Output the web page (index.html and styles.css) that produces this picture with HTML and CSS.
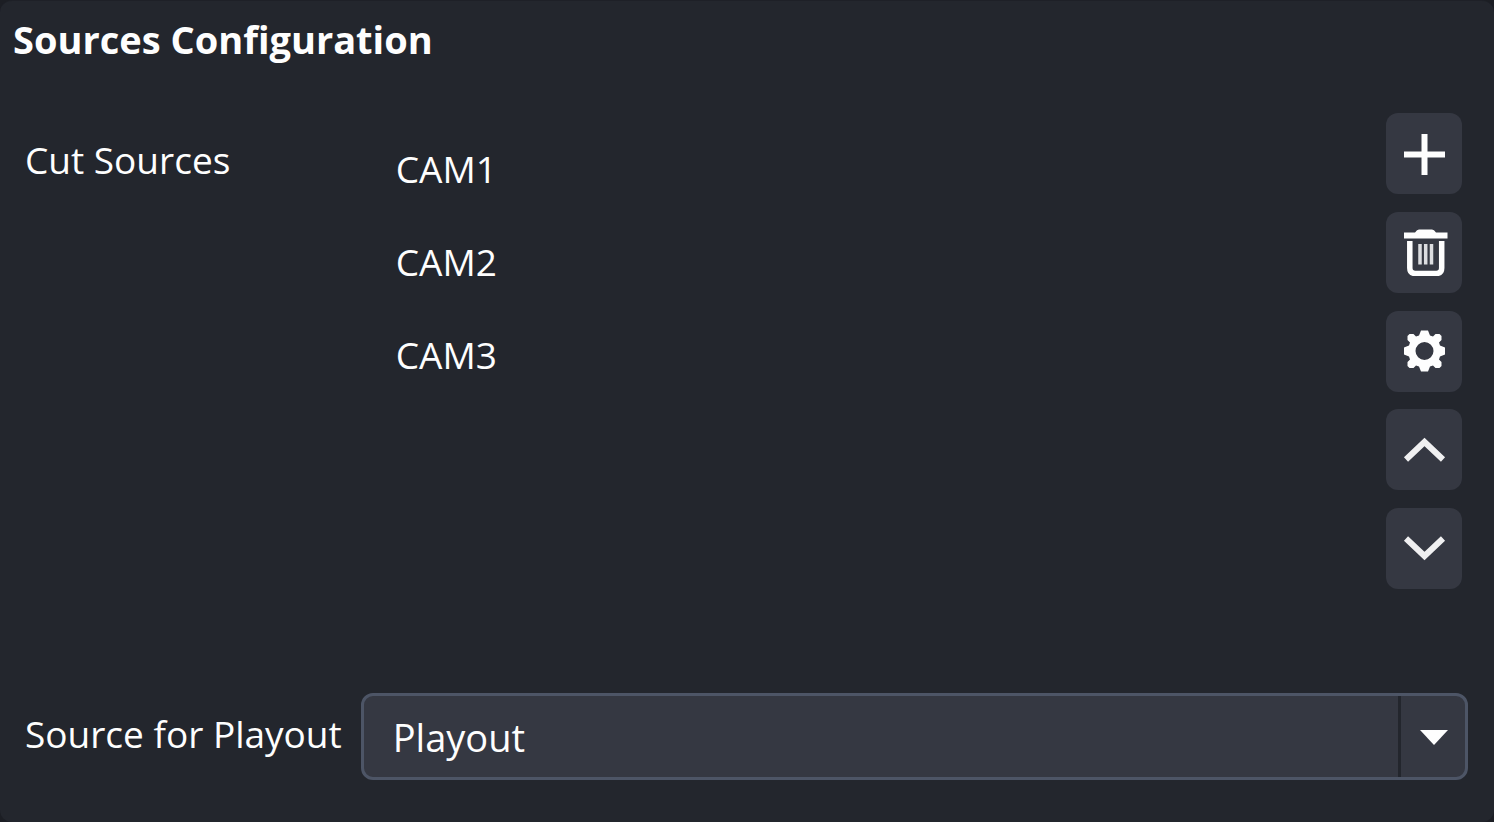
FILE: index.html
```html
<!DOCTYPE html>
<html lang="en">
<head>
<meta charset="utf-8">
<title>Sources Configuration</title>
<link rel="stylesheet" href="styles.css">
</head>
<body>
<main class="panel">
  <h1 class="title">Sources Configuration</h1>
  <form class="form">
    <span class="label label-top" id="cut-label">Cut Sources</span>
    <div class="sources">
      <ul class="list" aria-labelledby="cut-label">
        <li>CAM1</li>
        <li>CAM2</li>
        <li>CAM3</li>
      </ul>
      <div class="tools">
        <button class="tool" type="button" aria-label="Add">
          <svg viewBox="0 0 48 48"><path d="M4 24.500h41M24.500 4v41" stroke-width="6"/></svg>
        </button>
        <button class="tool" type="button" aria-label="Remove">
          <svg viewBox="0 0 48 48"><path class="fill" d="M4 4.500h11q2-3 4-3h13q2 0 4 3h11.500v6H4z"/><path d="M9.800 13v27q0 5.500 5.500 5.500h20.900q5.500 0 5.500-5.500V13" stroke-width="5.500"/><path class="bars" d="M20 16v20.500M25.700 16v20.500M31.500 16v20.500" stroke-width="3.500"/></svg>
        </button>
        <button class="tool" type="button" aria-label="Settings">
          <svg viewBox="-24.500 -24 48 48"><path class="fill" fill-rule="evenodd" d="M-3.500-20.500h7L5.500-15.500 8.500-14.500 11-17H15L17-15V-11L14.500-8.500 15.500-5.500 20.500-3.500v7L15.500 5.500 14.500 8.500 17 11V15L15 17H11L8.500 14.500 5.500 15.500 3.500 20.500h-7L-5.500 15.500-8.500 14.500-11 17H-15L-17 15V11L-14.500 8.500-15.500 5.500-20.500 3.500v-7L-15.500-5.500-14.500-8.500-17-11V-15L-15-17H-11L-8.500-14.500-5.500-15.500zM-9 0a9 9 0 1 0 18 0a9 9 0 1 0-18 0z"/></svg>
        </button>
        <button class="tool" type="button" aria-label="Move up">
          <svg viewBox="0 0 48 48"><path class="chevron" d="M6 33.500L24.500 16l18.500 17.500" stroke-width="6"/></svg>
        </button>
        <button class="tool" type="button" aria-label="Move down">
          <svg viewBox="0 0 48 48"><path class="chevron" d="M6 13.500L24.500 31l18.500-17.500" stroke-width="6"/></svg>
        </button>
      </div>
    </div>
    <label class="label" for="playout">Source for Playout</label>
    <div class="combo">
      <select id="playout" class="select"><option>Playout</option></select>
      <span class="arrow"><svg viewBox="0 0 28 15"><path class="fill" d="M0 0h28L14 15z"/></svg></span>
    </div>
  </form>
</main>
</body>
</html>
```
FILE: styles.css
```css
* { box-sizing: border-box; }

body {
  margin: 0;
  background: #1c1e24;
  color: #fefefe;
  font: 37px/48px "Open Sans", "Noto Sans", sans-serif;
}

.panel {
  min-height: 100vh;
  padding: 14px 26px 42px 13px;
  background: #23262d;
  border-top: 1px solid #1e2027;
  border-radius: 12px;
}

.title {
  margin: 0 0 50px;
  font-size: 38px;
  line-height: 48px;
  font-weight: 700;
}

.form {
  display: grid;
  grid-template-columns: auto 1fr;
  gap: 104px 19px;
  padding-left: 12px;
}

.label { align-self: center; margin-bottom: 6px; white-space: nowrap; }
.label-top { align-self: start; padding-top: 23px; }

.sources {
  display: flex;
  justify-content: space-between;
  padding-right: 6px;
}

.list {
  display: flex;
  flex-direction: column;
  gap: 45px;
  margin: 0;
  padding: 32px 0 0 35px;
  list-style: none;
}

.tools {
  display: flex;
  flex-direction: column;
  justify-content: space-between;
  min-height: 476px;
}

.tool {
  display: flex;
  align-items: center;
  justify-content: center;
  width: 76px;
  height: 81px;
  padding: 0;
  border: 0;
  border-radius: 12px;
  background: #353842;
}

.tool svg { width: 48px; height: 48px; }

svg { fill: none; stroke: #fefefe; }
.fill { fill: #fefefe; stroke: none; }
.bars { stroke: #dcdde0; }
.chevron { stroke: #f0f0f1; }

.combo { position: relative; }

.select {
  display: block;
  width: 100%;
  height: 87px;
  padding: 0 80px 0 29px;
  appearance: none;
  border: 3px solid #4d5566;
  border-radius: 12px;
  background: #353842;
  color: inherit;
  font: inherit;
  font-size: 38px;
}

.arrow {
  position: absolute;
  inset: 3px 3px 3px auto;
  display: flex;
  align-items: center;
  justify-content: center;
  width: 67px;
  padding: 2px 0 0 2px;
  border-left: 3px solid #23262d;
  pointer-events: none;
}

.arrow svg { width: 28px; height: 15px; }
```
